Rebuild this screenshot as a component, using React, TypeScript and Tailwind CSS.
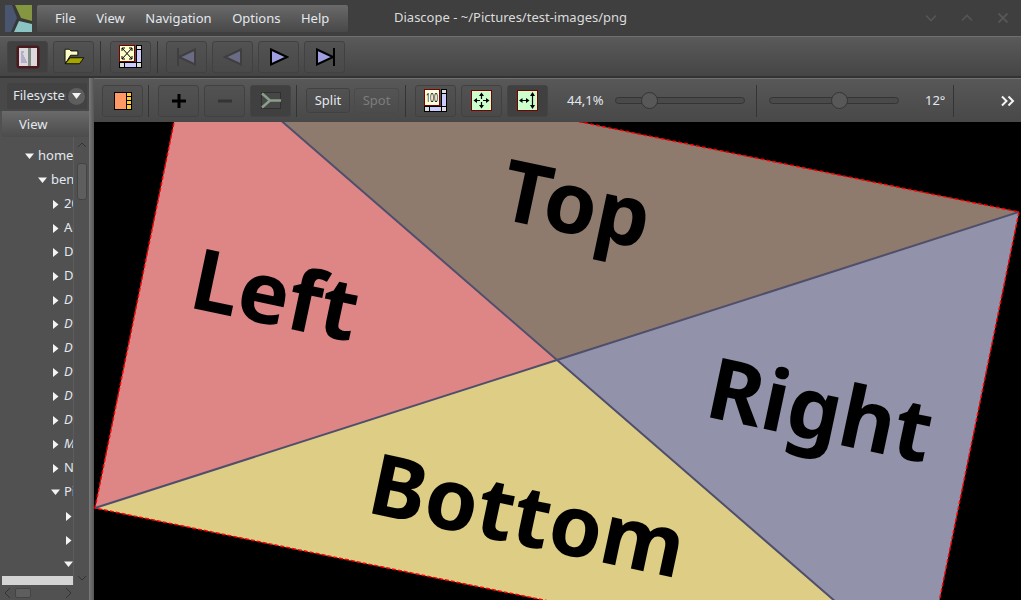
import React from 'react';

const FONT = '"Noto Sans", "Open Sans", sans-serif';

function Btn({ children, active, className = '' }: { children?: React.ReactNode; active?: boolean; className?: string }) {
  return (
    <div className={`w-[41px] h-[32px] shrink-0 flex items-center justify-center rounded-[3px] border ${active ? 'bg-[#404040] border-[#444]' : 'bg-gradient-to-b from-[#525252] to-[#494949] border-[#414141]'} ${className}`}>
      {children}
    </div>
  );
}

const Sep = ({ className = '' }: { className?: string }) => <div className={`w-px h-[32px] bg-[#343434] shrink-0 ${className}`} />;

function PanelIcon() {
  return (
    <svg width="24" height="24" viewBox="0 0 24 24">
      <rect x="0.5" y="0.5" width="23" height="23" rx="3" fill="#4a1a1e" />
      <rect x="3" y="3" width="18" height="18" fill="#dcd8dc" />
      <rect x="12" y="3" width="3" height="18" fill="#7e8c86" />
      <path d="M5 7h3M5 9h2M5 11h3M5 13h4M5 15h5M5 17h6" stroke="#8a86b8" strokeWidth="1" />
    </svg>
  );
}

function FolderIcon() {
  return (
    <svg width="22" height="17" viewBox="0 0 24 20">
      <path d="M1.5 15V1.5h5l2 2h8v5H8L2 18z" fill="#ffffc4" stroke="#000" />
      <path d="M1.5 18.5 7.5 11.5h16l-5 7z" fill="#a6a600" stroke="#000" />
    </svg>
  );
}

function FitBar({ children }: { children: React.ReactNode }) {
  return (
    <svg width="23" height="23" viewBox="0 0 23 23">
      <rect x="17.5" y="0.5" width="5" height="21" fill="#ccccff" stroke="#000" />
      <rect x="0.5" y="17.5" width="22" height="5" fill="#ccccff" stroke="#000" />
      <rect x="17.5" y="0.5" width="5" height="4" fill="#ddd" stroke="#000" />
      <rect x="0.5" y="17.5" width="5" height="5" fill="#ddd" stroke="#000" />
      <rect x="17.5" y="17.5" width="5" height="5" fill="#ddd" stroke="#000" />
      {children}
    </svg>
  );
}

function Media({ kind, dim }: { kind: 'first' | 'prev' | 'next' | 'last'; dim?: boolean }) {
  const stroke = dim ? '#3f3f3f' : '#000';
  const fill = dim ? '#6b6b85' : '#a0a0e0';
  const right = kind === 'next' || kind === 'last';
  return (
    <svg width="20" height="18" viewBox="0 0 20 18">
      <path d={right ? 'M2 1.5 18 9 2 16.500z' : 'M18 1.500 2 9 18 16.500z'} fill={fill} stroke={stroke} strokeWidth="2" />
      {kind === 'first' && <path d="M1 0v18" stroke={stroke} strokeWidth="2" />}
      {kind === 'last' && <path d="M19 0v18" stroke={stroke} strokeWidth="2" />}
    </svg>
  );
}

function Tri({ open }: { open?: boolean }) {
  return (
    <svg width="9" height="9" viewBox="0 0 9 9" className="shrink-0">
      <path d={open ? 'M0 1.500h9L4.500 7z' : 'M2 0l5.500 4.500L2 9z'} fill="#f4f4f4" />
    </svg>
  );
}

function Slider({ pos, className = '' }: { pos: string; className?: string }) {
  return (
    <div className={`relative w-[130px] h-[7px] shrink-0 rounded-full bg-[#4a4a4a] border border-[#343434] ${className}`}>
      <div className={`absolute top-[-6px] ${pos} w-[17px] h-[17px] rounded-full bg-[#585858] border border-[#343434]`} />
    </div>
  );
}

const treeRows: { label: string; pl: string; open?: boolean; italic?: boolean }[] = [
  { label: 'home', pl: 'pl-[23px]', open: true },
  { label: 'benjamin', pl: 'pl-[36px]', open: true },
  { label: '2024', pl: 'pl-[49px]' },
  { label: 'Archives', pl: 'pl-[49px]' },
  { label: 'Desktop', pl: 'pl-[49px]' },
  { label: 'Documents', pl: 'pl-[49px]' },
  { label: 'Downloads', pl: 'pl-[49px]', italic: true },
  { label: 'Dropbox', pl: 'pl-[49px]', italic: true },
  { label: 'Data', pl: 'pl-[49px]', italic: true },
  { label: 'Dev', pl: 'pl-[49px]', italic: true },
  { label: 'Disk', pl: 'pl-[49px]', italic: true },
  { label: 'Drive', pl: 'pl-[49px]', italic: true },
  { label: 'Music', pl: 'pl-[49px]', italic: true },
  { label: 'Notes', pl: 'pl-[49px]' },
  { label: 'Pictures', pl: 'pl-[49px]', open: true },
  { label: '', pl: 'pl-[62px]' },
  { label: '', pl: 'pl-[62px]' },
  { label: '', pl: 'pl-[62px]', open: true },
];

function Canvas() {
  const tl = '190.500,42';
  const tr = '1019,212';
  const br = '923.500,678';
  const bl = '95,508';
  const c = '557,360';
  return (
    <svg className="block w-[927px] h-[478px]" viewBox="94 122 927 478">
      <rect x="94" y="122" width="927" height="478" fill="#000" />
      <polygon points={`${tl} ${bl} ${c}`} fill="#de8585" />
      <polygon points={`${tl} ${tr} ${c}`} fill="#8f7b6e" />
      <polygon points={`${tr} ${br} ${c}`} fill="#9292ab" />
      <polygon points={`${bl} ${br} ${c}`} fill="#ddcd85" />
      <path d={`M${tl}L${c}L${br}M${bl}L${c}L${tr}`} stroke="#4f4f6c" strokeWidth="2" fill="none" />
      <polygon points={`${tl} ${tr} ${br} ${bl}`} fill="none" stroke="#ff0000" strokeWidth="1.500" strokeDasharray="4 2" />
      <g fontFamily={FONT} fontWeight="700" fontSize="85" fill="#000">
        <text transform="translate(187 307) rotate(12)">Left</text>
        <text transform="translate(497 218) rotate(12)">Top</text>
        <text transform="translate(703 416) rotate(12)">Right</text>
        <text transform="translate(365 512) rotate(12)">Bottom</text>
      </g>
    </svg>
  );
}

export default function App() {
  return (
    <div className="w-[1021px] h-[600px] overflow-hidden flex flex-col bg-[#3f3f3f] text-[13px] text-[#e3e8ee]" style={{ fontFamily: FONT }}>
      {/* Title bar */}
      <div className="h-[36px] shrink-0 flex items-center pl-[5px]">
        <svg width="27" height="27" viewBox="0 0 27 27" className="shrink-0">
          <rect width="27" height="27" fill="#383838" />
          <path d="M10 0h17v16l-11-3z" fill="#84963f" />
          <path d="M27 19v8H9l5-11z" fill="#8cc4c4" />
          <path d="M0 0h7l5 13-6 14H0z" fill="#4a5570" />
        </svg>
        <div className="ml-[5px] w-[311px] h-[27px] pt-[1px] rounded-[2px] flex items-center gap-[20.500px] pl-[18px] bg-gradient-to-b from-[#6a6a6a] to-[#484848]">
          <span>File</span>
          <span>View</span>
          <span>Navigation</span>
          <span>Options</span>
          <span>Help</span>
        </div>
        <span className="ml-[46px] text-[#dcdcdc]">Diascope - ~/Pictures/test-images/png</span>
        <div className="ml-auto flex items-center gap-[22px] pr-[11px]">
          <svg width="14" height="14" viewBox="0 0 14 14" fill="none" stroke="#565656" strokeWidth="1.600"><path d="M2 4.500 7 9.500l5-5" /></svg>
          <svg width="14" height="14" viewBox="0 0 14 14" fill="none" stroke="#565656" strokeWidth="1.600"><path d="M2 9.500 7 4.500l5 5" /></svg>
          <svg width="14" height="14" viewBox="0 0 14 14" fill="none" stroke="#565656" strokeWidth="1.800"><path d="M2.500 2.500l9 9M11.500 2.500l-9 9" /></svg>
        </div>
      </div>

      {/* Main toolbar */}
      <div className="h-[40px] shrink-0 border-t border-[#707070] bg-gradient-to-b from-[#5a5a5a] to-[#454545] flex items-center pl-[7px]">
        <Btn active><PanelIcon /></Btn>
        <Btn className="ml-[5px]"><FolderIcon /></Btn>
        <Sep className="ml-[6px]" />
        <Btn className="ml-[9px]">
          <FitBar>
            <rect x="0.500" y="0.500" width="15" height="16" fill="#ffffcc" stroke="#7a0000" />
            <path d="M3 3l10 11M13 3 3 14M3 3h3M3 3v3M13 3h-3M13 3v3M3 14h3M3 14v-3M13 14h-3M13 14v-3" stroke="#000" fill="none" />
          </FitBar>
        </Btn>
        <Sep className="ml-[6px]" />
        <Btn className="ml-[8px]"><Media kind="first" dim /></Btn>
        <Btn className="ml-[5px]"><Media kind="prev" dim /></Btn>
        <Btn className="ml-[5px]"><Media kind="next" /></Btn>
        <Btn className="ml-[5px]"><Media kind="last" /></Btn>
      </div>
      <div className="h-[2px] shrink-0 bg-[#333]" />

      {/* Body */}
      <div className="flex-1 flex min-h-0">
        {/* Sidebar */}
        <div className="w-[89px] shrink-0 flex flex-col bg-[#515151]">
          <div className="h-[33px] shrink-0 flex items-start pt-[5px] pl-[7px] bg-[#484848]">
            <div className="w-[80px] h-[26px] rounded-[2px] bg-[#424242] flex items-center pl-[6px] overflow-hidden relative">
              <span className="whitespace-nowrap">Filesystem</span>
              <div className="absolute right-0 top-0 h-full w-[21px] bg-[#424242] flex items-center justify-center">
                <div className="w-[17px] h-[17px] rounded-full bg-[#5e5e5e] flex items-center justify-center">
                  <svg width="9" height="6" viewBox="0 0 9 6"><path d="M0 0h9L4.500 6z" fill="#f4f4f4" /></svg>
                </div>
              </div>
            </div>
          </div>
          <div className="h-[26px] shrink-0 ml-[2px] pt-[2px] flex items-center pl-[17px] bg-gradient-to-b from-[#6a6a6a] to-[#4c4c4c]">View</div>
          <div className="flex-1 min-h-0 flex ml-[2px]">
            <div className="flex-1 min-w-0 flex flex-col">
              <div className="flex-1 min-h-0 overflow-hidden pt-[7px]">
                {treeRows.map((r, i) => (
                  <div key={i} className={`h-[24px] flex items-center gap-[4px] whitespace-nowrap ${r.pl} ${r.italic ? 'italic' : ''}`}>
                    <Tri open={r.open} />
                    <span>{r.label}</span>
                  </div>
                ))}
              </div>
              <div className="h-[9px] shrink-0 bg-[#d4d4d4]" />
            </div>
            <div className="w-[16px] shrink-0 border-l border-[#5c5c5c] bg-[#515151] flex flex-col items-center">
              <svg width="10" height="12" viewBox="0 0 10 12" fill="none" stroke="#333" className="mt-[2px]"><path d="M1 8l4-4 4 4" /></svg>
              <div className="mt-[12px] w-[10px] h-[37px] rounded-[3px] border border-[#444] bg-[#5e5e5e]" />
              <svg width="10" height="12" viewBox="0 0 10 12" fill="none" stroke="#333" className="mt-auto mb-[1px]"><path d="M1 4l4 4 4-4" /></svg>
            </div>
          </div>
          <div className="h-[15px] shrink-0 ml-[2px] flex items-center pl-[2px] bg-[#515151]">
            <svg width="8" height="12" viewBox="0 0 8 12" fill="none" stroke="#333" className="shrink-0"><path d="M6 1 1 6l5 5" /></svg>
            <div className="ml-[3px] w-[16px] h-[10px] rounded-[2px] border border-[#444] bg-[#5e5e5e] shrink-0" />
            <svg width="8" height="12" viewBox="0 0 8 12" fill="none" stroke="#333" className="ml-[33px] shrink-0"><path d="M2 1l5 5-5 5" /></svg>
          </div>
        </div>
        <div className="w-[5px] shrink-0 bg-gradient-to-r from-[#7a7a7a] to-[#555]" />

        {/* Viewer */}
        <div className="flex-1 min-w-0 flex flex-col">
          <div className="h-[44px] shrink-0 border-t border-[#707070] bg-gradient-to-b from-[#585858] to-[#484848] flex items-center pl-[8px]">
            <Btn>
              <svg width="18" height="18" viewBox="0 0 18 18">
                <rect x="0.500" y="0.500" width="17" height="17" fill="#ff9966" stroke="#000" />
                <rect x="12.500" y="0.500" width="5" height="17" fill="#ffcc33" stroke="#000" />
                <path d="M12.500 4.500h5M12.500 8.500h5M12.500 12.500h5" stroke="#000" />
              </svg>
            </Btn>
            <Sep className="ml-[5px]" />
            <Btn className="ml-[9px]">
              <svg width="14" height="14" viewBox="0 0 14 14"><path d="M7 0v14M0 7h14" stroke="#000" strokeWidth="3" /></svg>
            </Btn>
            <Btn className="ml-[5px]">
              <svg width="14" height="14" viewBox="0 0 14 14"><path d="M0 7h14" stroke="#343434" strokeWidth="3" /></svg>
            </Btn>
            <Btn active className="ml-[5px]">
              <svg width="20" height="17" viewBox="0 0 20 17">
                <rect x="0.500" y="0.500" width="19" height="16" fill="#474747" stroke="#2f2f2f" />
                <path d="M1 1.500 9 8.500 1 15.500M9 8.500h11" stroke="#8aa08a" strokeWidth="2.500" fill="none" />
              </svg>
            </Btn>
            <Sep className="ml-[5px]" />
            <div className="ml-[9px] w-[44px] h-[25px] shrink-0 flex items-center justify-center rounded-[3px] border border-[#414141] bg-gradient-to-b from-[#525252] to-[#494949]">Split</div>
            <div className="ml-[4px] w-[45px] h-[25px] shrink-0 flex items-center justify-center rounded-[3px] border border-[#4a4a4a] text-[#7c7c7c]">Spot</div>
            <Sep className="ml-[6px]" />
            <Btn className="ml-[9px]">
              <FitBar>
                <rect x="0.500" y="0.500" width="15" height="16" fill="#ffffe0" stroke="#7a0000" />
                <text x="2" y="13" fontSize="12" fill="#000" fontFamily={FONT} textLength="12" lengthAdjust="spacingAndGlyphs">100</text>
              </FitBar>
            </Btn>
            <Btn className="ml-[5px]">
              <svg width="21" height="21" viewBox="0 0 21 21">
                <rect x="0.500" y="0.500" width="20" height="20" fill="#ccffcc" stroke="#7a0000" />
                <path d="M10.500 4v5M10.500 12v5M4 10.500h5M12 10.500h5" stroke="#000" strokeWidth="1.200" />
                <path d="M10.500 2.500 8 6h5zM10.500 18.500 8 15h5zM2.500 10.500 6 8v5zM18.500 10.500 15 8v5z" fill="#000" />
              </svg>
            </Btn>
            <Btn active className="ml-[5px]">
              <svg width="21" height="21" viewBox="0 0 21 21">
                <rect x="0.500" y="0.500" width="20" height="20" fill="#ccffcc" stroke="#7a0000" />
                <path d="M15.500 4v13M4 10.500h7" stroke="#000" strokeWidth="1.200" />
                <path d="M15.500 2 13 6h5zM15.500 19 13 15h5zM2 10.500 5.500 8v5zM12.500 10.500 9 8v5z" fill="#000" />
              </svg>
            </Btn>
            <span className="ml-[19px] w-[48px] shrink-0">44,1%</span>
            <Slider pos="left-[25px]" />
            <Sep className="ml-[11px]" />
            <Slider pos="left-[61px]" className="ml-[12px]" />
            <span className="ml-[26px] w-[23px] shrink-0">12°</span>
            <Sep className="ml-[5px]" />
            <svg width="14" height="12" viewBox="0 0 14 12" fill="none" stroke="#f4f4f4" strokeWidth="2" className="ml-[47px] shrink-0">
              <path d="M1 1.500 5.500 6 1 10.500M7.500 1.500 12 6l-4.500 4.500" />
            </svg>
          </div>
          <Canvas />
        </div>
      </div>
    </div>
  );
}
